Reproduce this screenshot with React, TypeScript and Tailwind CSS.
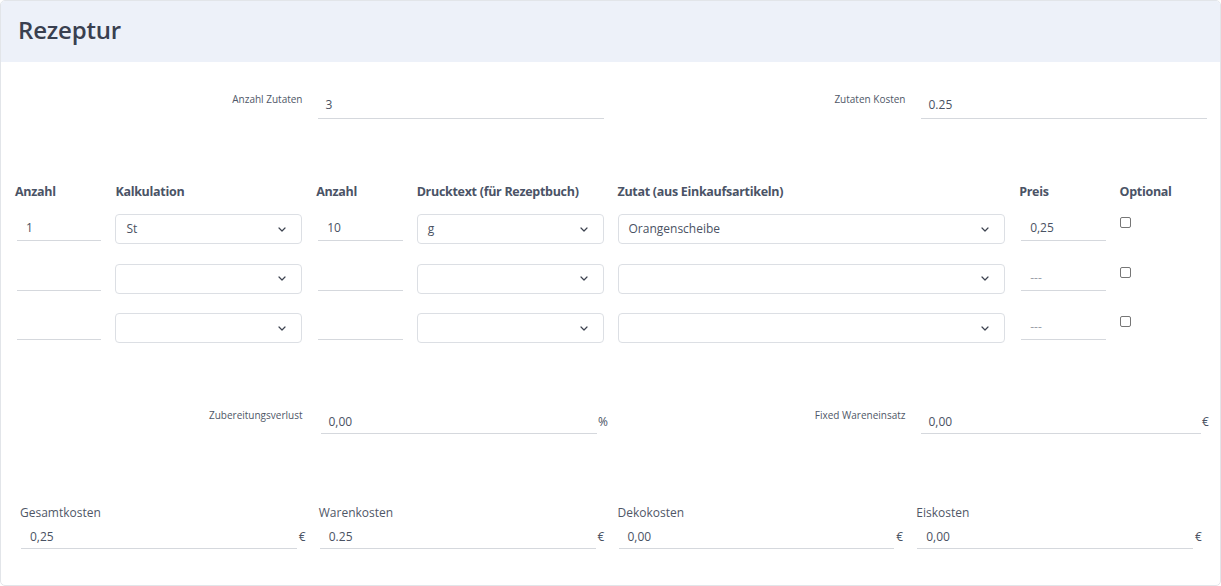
import React from "react";

const Chevron = () => (
  <svg width="8" height="5" viewBox="0 0 8 5" className="shrink-0">
    <path d="M1 1l3 3 3-3" fill="none" stroke="#3d4350" strokeWidth="1.2" strokeLinecap="round" strokeLinejoin="round" />
  </svg>
);

const Select = ({ value }: { value?: string }) => (
  <div className="h-[30px] flex items-center justify-between rounded-[4px] border border-[#dcdfe4] pl-[10px] pr-[15px] text-[12px] text-[#4a5263] bg-white">
    <span>{value ?? ""}</span>
    <Chevron />
  </div>
);

const UInput = ({ value, placeholder }: { value?: string; placeholder?: boolean }) => (
  <div className={`h-[27px] flex items-end pb-[3px] leading-[18px] border-b border-[#d5d8dd] pl-[9px] text-[12px] ${placeholder ? "text-[#9aa0a8]" : "text-[#4a5263]"}`}>
    {value ?? ""}
  </div>
);

const Check = () => (
  <div className="mt-[3px] w-[11px] h-[11px] rounded-[2px] border border-[#767676] bg-white" />
);

const rows = [
  { a: "1", k: "St", n: "10", d: "g", z: "Orangenscheibe", p: "0,25", ph: false },
  { a: "", k: "", n: "", d: "", z: "", p: "---", ph: true },
  { a: "", k: "", n: "", d: "", z: "", p: "---", ph: true },
];

const Head = ({ children, span }: { children: React.ReactNode; span: string }) => (
  <div className={`${span} pl-[14px] text-[12.5px] leading-[18px] font-bold text-[#4a5366] tracking-[-0.3px]`}>{children}</div>
);

const BottomField = ({ label, value }: { label: string; value: string }) => (
  <div className="flex flex-col">
    <div className="text-[12px] leading-[18px] text-[#4f5767]">{label}</div>
    <div className="mt-[3px] flex items-end pr-[12px]">
      <div className="ml-[1px] flex-1 h-[24px] flex items-center border-b border-[#d5d8dd] pl-[9px] text-[12px] text-[#4a5263]">{value}</div>
      <div className="w-[8px] ml-[2px] h-[24px] flex items-center text-[12px] text-[#4a5263]">€</div>
    </div>
  </div>
);

export default function App() {
  return (
    <div className="w-[1221px] h-[586px] bg-white font-['Open_Sans',sans-serif]">
      <div className="h-[586px] w-[1221px] border border-[#e2e5e9] rounded-[5px] overflow-hidden flex flex-col">
        <div className="h-[61px] bg-[#edf1f9] pl-[17px] pb-[4px] flex items-center">
          <h1 className="text-[24px] font-semibold text-[#394050] tracking-[-0.2px]">Rezeptur</h1>
        </div>

        {/* top row */}
        <div className="pt-[29px] pr-[13px] grid grid-cols-2">
          <div className="grid grid-cols-2 items-start">
            <div className="text-right text-[10px] leading-[14px] text-[#4f5767] pt-[1px]">Anzahl Zutaten</div>
            <div className="pl-[15px]">
              <div className="h-[28px] flex items-center border-b border-[#d5d8dd] pl-[8px] text-[12px] text-[#4a5263]">3</div>
            </div>
          </div>
          <div className="grid grid-cols-2 items-start">
            <div className="text-right text-[10px] leading-[14px] text-[#4f5767] pt-[1px]">Zutaten Kosten</div>
            <div className="pl-[15px]">
              <div className="h-[28px] flex items-center border-b border-[#d5d8dd] pl-[8px] text-[12px] text-[#4a5263]">0.25</div>
            </div>
          </div>
        </div>

        {/* table */}
        <div className="mt-[64px] pr-[14px] grid grid-cols-12">
          <Head span="col-span-1">Anzahl</Head>
          <Head span="col-span-2">Kalkulation</Head>
          <Head span="col-span-1">Anzahl</Head>
          <Head span="col-span-2">Drucktext (für Rezeptbuch)</Head>
          <Head span="col-span-4">Zutat (aus Einkaufsartikeln)</Head>
          <Head span="col-span-1">Preis</Head>
          <Head span="col-span-1">Optional</Head>
        </div>
        <div className="mt-[13px] pr-[14px] flex flex-col gap-y-[19.5px]">
          {rows.map((r, i) => (
            <div key={i} className="grid grid-cols-12 items-start">
              <div className="col-span-1 pl-[16px]"><UInput value={r.a} /></div>
              <div className="col-span-2 pl-[14px]"><Select value={r.k} /></div>
              <div className="col-span-1 pl-[16px]"><UInput value={r.n} /></div>
              <div className="col-span-2 pl-[14px]"><Select value={r.d} /></div>
              <div className="col-span-4 pl-[14px]"><Select value={r.z} /></div>
              <div className="col-span-1 pl-[16px]"><UInput value={r.p} placeholder={r.ph} /></div>
              <div className="col-span-1 pl-[14px]"><Check /></div>
            </div>
          ))}
        </div>

        {/* loss row */}
        <div className="mt-[65px] pr-[13px] grid grid-cols-2">
          <div className="grid grid-cols-2 items-start">
            <div className="text-right text-[10px] leading-[14px] text-[#4f5767]">Zubereitungsverlust</div>
            <div className="pl-[18px] pt-[2px] flex items-end mr-[-4px]">
              <div className="flex-1 h-[24px] flex items-center border-b border-[#d5d8dd] pl-[8px] text-[12px] text-[#4a5263]">0,00</div>
              <div className="w-[10px] ml-[1px] h-[24px] flex items-center text-[12px] text-[#4a5263]">%</div>
            </div>
          </div>
          <div className="grid grid-cols-2 items-start">
            <div className="text-right text-[10px] leading-[14px] text-[#4f5767]">Fixed Wareneinsatz</div>
            <div className="pl-[15px] pt-[2px] flex items-end mr-[-3px]">
              <div className="flex-1 h-[24px] flex items-center border-b border-[#d5d8dd] pl-[8px] text-[12px] text-[#4a5263]">0,00</div>
              <div className="w-[8px] ml-[1px] h-[24px] flex items-center text-[12px] text-[#4a5263]">€</div>
            </div>
          </div>
        </div>

        {/* bottom */}
        <div className="mt-[70px] pl-[19px] pr-[5px] grid grid-cols-4">
          <BottomField label="Gesamtkosten" value="0,25" />
          <BottomField label="Warenkosten" value="0.25" />
          <BottomField label="Dekokosten" value="0,00" />
          <BottomField label="Eiskosten" value="0,00" />
        </div>
      </div>
    </div>
  );
}
